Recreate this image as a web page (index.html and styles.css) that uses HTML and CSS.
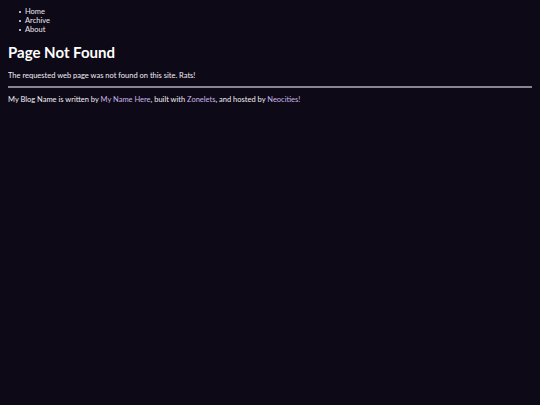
FILE: index.html
```html
<!DOCTYPE html>
<html>
<head>
<meta charset="utf-8">
<link rel="stylesheet" href="styles.css">
</head>
<body>
<nav class="nav">
  <ul class="nav-list">
    <li class="nav-item"><a class="nav-link" href="#">Home</a></li>
    <li class="nav-item"><a class="nav-link" href="#">Archive</a></li>
    <li class="nav-item"><a class="nav-link" href="#">About</a></li>
  </ul>
</nav>
<main class="main">
  <h1 class="title">Page Not Found</h1>
  <p class="text">The requested web page was not found on this site. Rats!</p>
</main>
<hr class="rule">
<footer class="footer">My Blog Name is written by <a class="link" href="#">My Name Here</a>, built with <a class="link" href="#">Zonelets</a>, and hosted by <a class="link" href="#">Neocities!</a></footer>
</body>
</html>
```
FILE: styles.css
```css
html, body {
  background: #0e0916;
}
body {
  margin: 7px 8px 8px;
  color: #f1eef5;
  font-family: "Lato", "Noto Sans", sans-serif;
  font-size: 7.5px;
  line-height: 9px;
}
.nav-list {
  margin: 0;
  padding-left: 10px;
  list-style: none;
}
.nav-item {
  display: flex;
  align-items: center;
}
.nav-item::before {
  content: "";
  width: 2px;
  height: 2px;
  border-radius: 50%;
  background: #ece8f2;
  margin: 0 4px 0 1px;
}
.nav-link {
  color: #ece8f2;
  text-decoration: none;
}
.title {
  font-size: 15px;
  line-height: 20px;
  font-weight: 700;
  margin: 8px 0 0;
  color: #ffffff;
}
.text {
  margin: 9px 0 0;
}
.rule {
  margin: 6px 0 0;
  border: none;
  height: 1.5px;
  background: #8a8492;
}
.footer {
  margin-top: 7px;
}
.link {
  color: #c9b6ea;
  text-decoration: none;
}
```
